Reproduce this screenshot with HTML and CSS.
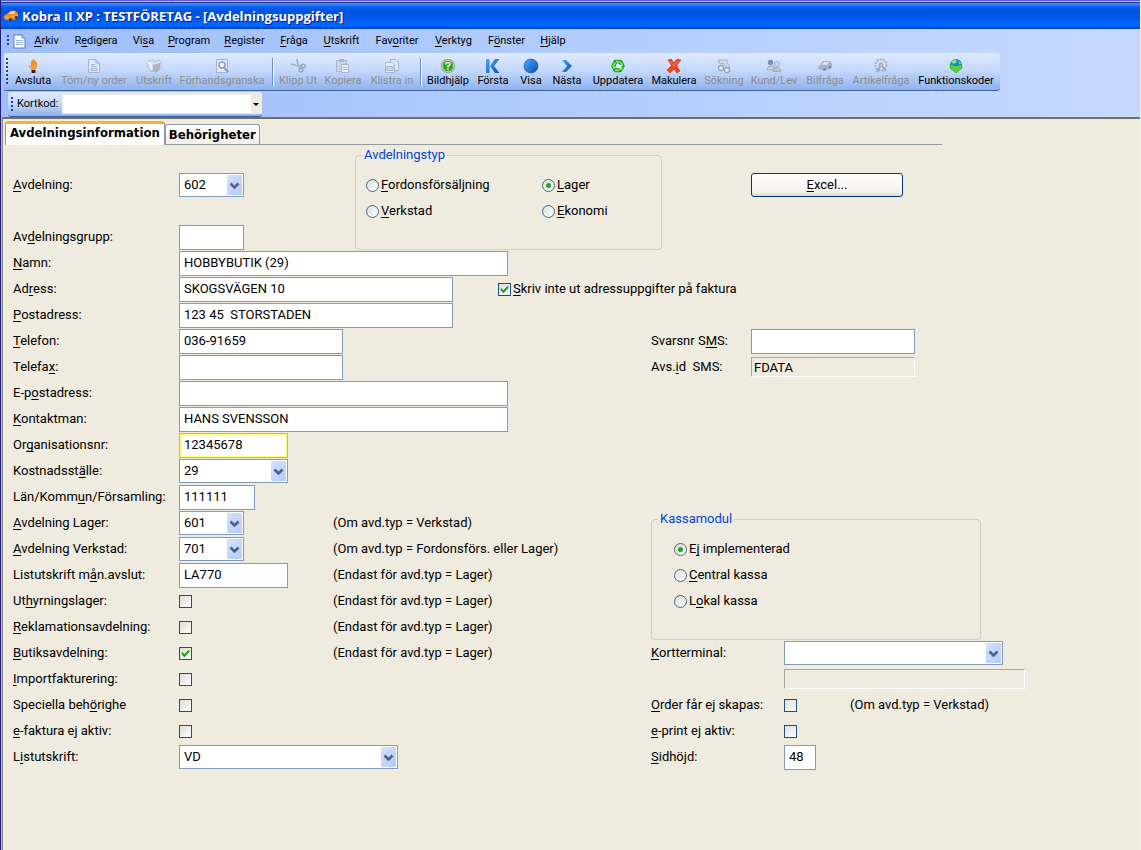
FILE: index.html
```html
<!DOCTYPE html>
<html lang="sv">
<head>
<meta charset="utf-8">
<title>Kobra II XP : TESTFÖRETAG - [Avdelningsuppgifter]</title>
<link rel="stylesheet" href="styles.css">
</head>
<body>
<svg class="defs" width="0" height="0" aria-hidden="true">
  <defs>
    <linearGradient id="blue" x1="0" y1="0" x2="1" y2="1"><stop offset="0" stop-color="#4aa8f5"/><stop offset="1" stop-color="#0b50b4"/></linearGradient>
    <symbol id="chevron" viewBox="0 0 15 20"><path d="M3.5 8.5 7.5 12.5 11.5 8.5" fill="none" stroke="#4d6185" stroke-width="2.6"/></symbol>
  </defs>
</svg>
<div class="window">
  <header class="titlebar">
    <svg width="16" height="14" viewBox="0 0 16 14"><path d="M1 8 Q1 5.500 4 5 L7 2 Q10 .8 13 2 L15 5 V8 L12 10.500 6 11.500 2 10.500Z" fill="#f58a1f"/><path d="M5.500 5 8 2.800 Q10 2 12 2.800 L10.500 5.300Z" fill="#ffd9a0"/><path d="M1 8 6 9 14 6.500" stroke="#ffc070" fill="none"/><circle cx="7.500" cy="10.500" r="1.700" fill="#4a2a20"/><circle cx="13.300" cy="8.300" r="1.400" fill="#4a2a20"/></svg>
    <h1>Kobra II XP : TESTFÖRETAG - [Avdelningsuppgifter]</h1>
  </header>
  <nav class="menubar">
    <span class="grip grip-menu"></span>
    <svg width="13" height="15" viewBox="0 0 13 15"><path d="M1 1H9L12 4V14H1Z" fill="#fff" stroke="#6f7f9c"/><path d="M9 1V4H12" fill="#dde6f5" stroke="#6f7f9c"/><path d="M3 6.500H10M3 8.500H10M3 10.500H10" stroke="#9db7dc"/></svg>
    <a href="#"><u>A</u>rkiv</a><a href="#">R<u>e</u>digera</a><a href="#">Vi<u>s</u>a</a><a href="#"><u>P</u>rogram</a><a href="#"><u>R</u>egister</a><a href="#"><u>F</u>råga</a><a href="#"><u>U</u>tskrift</a><a href="#">Fav<u>o</u>riter</a><a href="#"><u>V</u>erktyg</a><a href="#">F<u>ö</u>nster</a><a href="#"><u>H</u>jälp</a>
  </nav>
  <div class="toolbar">
    <span class="grip"></span>
    <button><svg viewBox="0 0 16 16"><path d="M5 10 3.500 7.500 5 7 6 8 6 3 Q6.500 2 7.200 3L7.500 1.500Q8.300.5 9 1.500L9.500 2.500Q10.500 2 10.800 3L11 4Q12 4 12 5V9L10.500 12H6.500Z" fill="#f89a35"/><path d="M7.300 3V7M9 2V7M10.700 4V7" stroke="#d8701a" stroke-width=".5"/><path d="M6.500 12H10.500V15H6.500Z" fill="#4a1d12"/></svg>Avsluta</button>
    <button disabled><svg viewBox="0 0 16 16"><path d="M2.500 1.500H10L13.500 5V14.500H2.500Z" fill="#dfe8f8" stroke="#a9b4ca"/><path d="M10 1.500V5H13.500M5 6.500H9M5 8.500H11M5 10.500H11V12.500H5Z" fill="none" stroke="#a9b4ca"/></svg>Töm/ny order</button>
    <button disabled><svg viewBox="0 0 16 16"><path d="M1 4 6 2 9 4 13 2 15 4V11L10 14 5 13 2 9Z" fill="#dfe6f3" stroke="#b3bccd"/><path d="M6 7 14 5V11L10 14 6 12Z" fill="#a9b4c9"/><path d="M1 4 6 7V12" stroke="#fff" fill="none"/></svg>Utskrift</button>
    <button disabled><svg viewBox="0 0 16 16"><path d="M2.500 1.500H13.500V14.500H2.500Z" fill="#dfe8f8" stroke="#a9b4ca"/><circle cx="8" cy="7" r="3" fill="#f2f6ff" stroke="#8e9db8" stroke-width="1.500"/><path d="M10 9.500 14 14" stroke="#8e9db8" stroke-width="2"/></svg>Förhandsgranska</button>
    <span class="sep"></span>
    <button disabled><svg viewBox="0 0 16 16"><path d="M7 1 8 8 11 10M1 6 8 8 13 7" fill="none" stroke="#a4b0c8" stroke-width="1.700"/><circle cx="11" cy="12" r="2" fill="none" stroke="#98a5bf" stroke-width="1.300"/><circle cx="13.500" cy="8" r="1.800" fill="none" stroke="#98a5bf" stroke-width="1.300"/></svg>Klipp Ut</button>
    <button disabled><svg viewBox="0 0 16 16"><path d="M1.500 2.500H11.500V13.500H1.500Z" fill="#cbd6ea" stroke="#a9b4ca"/><path d="M4 1H9V4H4Z" fill="#a9b4ca"/><path d="M6.500 6.500H13.500V14.500H6.500Z" fill="#e6eefc" stroke="#a9b4ca"/><path d="M8 9.500H12M8 11.500H12" stroke="#a9b4ca"/></svg>Kopiera</button>
    <button disabled><svg viewBox="0 0 16 16"><path d="M6.500 1.500H12L14.500 4V12.500H6.500Z" fill="#dfe8f8" stroke="#a9b4ca"/><path d="M1.500 4.500H8L10.500 7V14.500H1.500Z" fill="#e6eefc" stroke="#a9b4ca"/><path d="M3 8.500H9V12.500H3Z" fill="#cbd6ea" stroke="#a9b4ca"/></svg>Klistra in</button>
    <span class="sep"></span>
    <button><svg viewBox="0 0 16 16"><circle cx="8" cy="8" r="6.500" fill="#25a51c" stroke="#a9aa9d" stroke-width="1.500"/><circle cx="8" cy="8" r="5.500" fill="none" stroke="#d9efd0" stroke-width=".7"/><path d="M6 6.500Q6 4.500 8 4.500T10 6.300Q10 7.300 8 8.200V9.300M8 10.300V11.800" fill="none" stroke="#fff" stroke-width="1.600"/></svg>Bildhjälp</button>
    <button><svg viewBox="0 0 16 16"><path d="M1 1H4.500V15H1ZM10 1H14.500L9 8 14.500 15H10L5 8Z" fill="url(#blue)"/></svg>Första</button>
    <button><svg viewBox="0 0 16 16"><circle cx="8" cy="8" r="7" fill="url(#blue)" stroke="#1259b2" stroke-width=".7"/></svg>Visa</button>
    <button><svg viewBox="0 0 16 16"><path d="M3 2H7L13 8 7 14H3L8 8Z" fill="url(#blue)"/></svg>Nästa</button>
    <button><svg viewBox="0 0 16 16"><path d="M3.300 8 5.500 3.700 10.500 3.700 12.700 8 10 12.300 5.500 12.300Z" fill="none" stroke="#17a018" stroke-width="4" stroke-linejoin="round"/><path d="M3.300 8 5.500 3.700 10.500 3.700 12.700 8 10 12.300 5.500 12.300Z" fill="none" stroke="#7be066" stroke-width="2" stroke-dasharray="4 1.200"/><path d="M5 10 8 4.500 8.500 8 12 6.500 10.500 11 8 9.500Z" fill="#eefaea"/></svg>Uppdatera</button>
    <button><svg viewBox="0 0 16 16"><path d="M2 2 5 1 8 5 11 1 15 2 10.500 7.500 14 13 11 15 8 11 4 15 1 12 5.500 7.500Z" fill="#f2451e" stroke="#c92a10" stroke-width=".6"/><path d="M3.500 3 8 8 12.500 2.500" stroke="#ff9170" fill="none" stroke-width=".8"/></svg>Makulera</button>
    <button disabled><svg viewBox="0 0 16 16"><path d="M2 2H11V5L14 9 12 11 8 6 3 5Z" fill="#d3dae6" stroke="#a6b0c2"/><circle cx="5" cy="10" r="2.500" fill="#e6ebf4" stroke="#98a3b8" stroke-width="1.300"/><circle cx="11" cy="12" r="2.500" fill="#e6ebf4" stroke="#98a3b8" stroke-width="1.300"/></svg>Sökning</button>
    <button disabled><svg viewBox="0 0 16 16"><circle cx="4.500" cy="4.500" r="2.700" fill="#7c90b8"/><path d="M1 12Q1 8 5 8T8 12Z" fill="#c7d1e3" stroke="#9da9c0"/><circle cx="11" cy="6" r="2.500" fill="#d5dce9" stroke="#9da9c0"/><path d="M7 13.500Q8 9 11 9T14.500 13.500Z" fill="#bac5da" stroke="#9da9c0"/></svg>Kund/Lev</button>
    <button disabled><svg viewBox="0 0 16 16"><path d="M1 9 3 7 6 3 13 3 15 6V9L11 12 4 12 1 11Z" fill="#aab3c6"/><path d="M5 6.500 7 4H12L10 7Z" fill="#dce3ef"/><circle cx="7.500" cy="11.500" r="1.500" fill="#7f899d"/><circle cx="13" cy="9.500" r="1.300" fill="#7f899d"/></svg>Bilfråga</button>
    <button disabled><svg viewBox="0 0 16 16"><circle cx="8" cy="7" r="5.500" fill="#dfe5ef" stroke="#a3acbc" stroke-width="2" stroke-dasharray="2 1"/><circle cx="8" cy="7" r="2" fill="#bcc6d8" stroke="#98a3b8"/><path d="M9 8 13 13M7 9 4 14" stroke="#98a3b8" stroke-width="2"/></svg>Artikelfråga</button>
    <button><svg viewBox="0 0 16 16"><circle cx="8" cy="7" r="6" fill="#168cc5"/><path d="M3 4 7 1 9 4 6 6ZM10 3 13 5 12 7Z" fill="#8de07a"/><path d="M2 7H5Q8 9 11 7H14V10L8 15 2 10Z" fill="#55d52f" stroke="#2c9b20" stroke-width=".6"/></svg>Funktionskoder</button>
  </div>
  <div class="cardbar">
    <span class="grip grip-card"></span>
    <label for="kortkod">Kortkod:</label>
    <span class="flatcombo"><select id="kortkod"><option></option></select><svg width="10" height="18" viewBox="0 0 10 18"><path d="M2 8H8L5 11Z"/></svg></span>
  </div>
  <main>
    <div class="tabs" role="tablist">
      <button class="tab active" role="tab" aria-selected="true">Avdelningsinformation</button>
      <button class="tab" role="tab" aria-selected="false">Behörigheter</button>
    </div>
    <form class="form">
      <label class="l r2" for="avd"><u>A</u>vdelning:</label>
      <span class="f r2 combo w65"><select id="avd"><option>602</option></select><svg class="arrow"><use href="#chevron"/></svg></span>
      <fieldset class="typ">
        <legend>Avdelningstyp</legend>
        <div class="radios two">
          <label><input type="radio" name="typ"><span><u>F</u>ordonsförsäljning</span></label>
          <label><input type="radio" name="typ" checked><span><u>L</u>ager</span></label>
          <label><input type="radio" name="typ"><span><u>V</u>erkstad</span></label>
          <label><input type="radio" name="typ"><span><u>E</u>konomi</span></label>
        </div>
      </fieldset>
      <button type="button" class="excel r2"><u>E</u>xcel...</button>

      <label class="l r4" for="grp">Av<u>d</u>elningsgrupp:</label><input class="f r4 w65" id="grp">
      <label class="l r5" for="namn"><u>N</u>amn:</label><input class="f r5 w329" id="namn" value="HOBBYBUTIK (29)">
      <label class="l r6" for="adr">Ad<u>r</u>ess:</label><input class="f r6 w274" id="adr" value="SKOGSVÄGEN 10">
      <label class="skriv r6"><input type="checkbox" checked><span><u>S</u>kriv inte ut adressuppgifter på faktura</span></label>
      <label class="l r7" for="post"><u>P</u>ostadress:</label><input class="f r7 w274" id="post" value="123 45  STORSTADEN">
      <label class="l r8" for="tel"><u>T</u>elefon:</label><input class="f r8 w164" id="tel" value="036-91659">
      <label class="l2 r8" for="svar">Svarsnr S<u>M</u>S:</label><input class="f2 r8 w164" id="svar">
      <label class="l r9" for="fax">Telefa<u>x</u>:</label><input class="f r9 w164" id="fax">
      <label class="l2 r9" for="avs">Avs.<u>i</u>d&nbsp; SMS:</label><input class="f2 r9 w164 readonly" id="avs" value="FDATA" readonly>
      <label class="l r10" for="epost">E-p<u>o</u>stadress:</label><input class="f r10 w329" id="epost">
      <label class="l r11" for="kon"><u>K</u>ontaktman:</label><input class="f r11 w329" id="kon" value="HANS SVENSSON">
      <label class="l r12" for="org">Or<u>g</u>anisationsnr:</label><input class="f r12 w109 current" id="org" value="12345678">
      <label class="l r13" for="kost">Kostnadsst<u>ä</u>lle:</label>
      <span class="f r13 combo w109"><select id="kost"><option>29</option></select><svg class="arrow"><use href="#chevron"/></svg></span>
      <label class="l r14" for="lan">Län/Komm<u>u</u>n/Församling:</label><input class="f r14 w76" id="lan" value="111111">
      <label class="l r15" for="lager"><u>A</u>vdelning Lager:</label>
      <span class="f r15 combo w65"><select id="lager"><option>601</option></select><svg class="arrow"><use href="#chevron"/></svg></span>
      <span class="n r15">(Om avd.typ = Verkstad)</span>
      <label class="l r16" for="verk"><u>A</u>vdelning Verkstad:</label>
      <span class="f r16 combo w65"><select id="verk"><option>701</option></select><svg class="arrow"><use href="#chevron"/></svg></span>
      <span class="n r16">(Om avd.typ = Fordonsförs. eller Lager)</span>
      <label class="l r17" for="man">Listutskrift m<u>å</u>n.avslut:</label><input class="f r17 w109" id="man" value="LA770">
      <span class="n r17">(Endast för avd.typ = Lager)</span>
      <label class="l r18" for="uth">Ut<u>h</u>yrningslager:</label><input class="f r18" type="checkbox" id="uth">
      <span class="n r18">(Endast för avd.typ = Lager)</span>
      <label class="l r19" for="rek"><u>R</u>eklamationsavdelning:</label><input class="f r19" type="checkbox" id="rek">
      <span class="n r19">(Endast för avd.typ = Lager)</span>
      <label class="l r20" for="but"><u>B</u>utiksavdelning:</label><input class="f r20" type="checkbox" id="but" checked>
      <span class="n r20">(Endast för avd.typ = Lager)</span>
      <label class="l r21" for="imp"><u>I</u>mportfakturering:</label><input class="f r21" type="checkbox" id="imp">
      <label class="l r22" for="spec">Speciella beh<u>ö</u>righe</label><input class="f r22" type="checkbox" id="spec">
      <label class="l r23" for="efa"><u>e</u>-faktura ej aktiv:</label><input class="f r23" type="checkbox" id="efa">
      <label class="l r24" for="lst">L<u>i</u>stutskrift:</label>
      <span class="f r24 combo w219"><select id="lst"><option>VD</option></select><svg class="arrow"><use href="#chevron"/></svg></span>

      <fieldset class="kassa">
        <legend>Kassamodul</legend>
        <div class="radios">
          <label><input type="radio" name="kassa" checked><span>E<u>j</u> implementerad</span></label>
          <label><input type="radio" name="kassa"><span><u>C</u>entral kassa</span></label>
          <label><input type="radio" name="kassa"><span>L<u>o</u>kal kassa</span></label>
        </div>
      </fieldset>
      <label class="l2 r20" for="kort"><u>K</u>ortterminal:</label>
      <span class="f3 r20 combo w219"><select id="kort"><option></option></select><svg class="arrow"><use href="#chevron"/></svg></span>
      <input class="f3 r21 w241 readonly" aria-label="Kortterminal, namn" readonly>
      <label class="l2 r22" for="ord"><u>O</u>rder får ej skapas:</label><input class="f3 r22" type="checkbox" id="ord">
      <span class="n2 r22">(Om avd.typ = Verkstad)</span>
      <label class="l2 r23" for="epr"><u>e</u>-print ej aktiv:</label><input class="f3 r23" type="checkbox" id="epr">
      <label class="l2 r24" for="sid"><u>S</u>idhöjd:</label><input class="f3 r24 w32" id="sid" value="48">
    </form>
  </main>
</div>
</body>
</html>
```

FILE: styles.css
```css
* { box-sizing: border-box; }
body {
  margin: 0;
  font: 13px/18px Roboto, "DejaVu Sans Condensed", sans-serif;
  color: #000;
  background: #efebde;
}
.defs { position: absolute; }
button, input, select { font: inherit; color: inherit; }
u { text-underline-offset: 2px; text-decoration-thickness: 1px; text-decoration-skip-ink: none; }

.window {
  display: flex;
  flex-direction: column;
  min-height: 100vh;
  border-left: 1px solid #20207c;
  border-right: 1px solid #f4f2ea;
  background: linear-gradient(90deg, #9ebefa, #c6daff);
}
.titlebar {
  display: flex;
  align-items: center;
  gap: 3px;
  height: 29px;
  padding: 3px 2px 0;
  background: linear-gradient(180deg, #5a58e0 0, #5a58e0 1px, #c2c4f6 1px, #c2c4f6 2px, #25347e 2px, #25347e 3px, #3d95ff 3px, #0a5ff0 7px, #0053e1 11px, #0058ee 18px, #0068ff 24px, #0064fa 26px, #003fc8 29px);
}
.titlebar h1 {
  margin: 0;
  font: bold 13px/18px "Open Sans", "Noto Sans", sans-serif;
  color: #fff;
  text-shadow: 1px 1px #0a1883;
}

.grip {
  align-self: center;
  width: 2px;
  height: 28px;
  background: repeating-linear-gradient(180deg, #27417b 0 2px, transparent 2px 4px);
}
.menubar {
  display: grid;
  grid-template-columns: 2px 18px 39px 60px 35px 56px 55px 44px 51px 60px 53px 53px 40px;
  align-items: center;
  height: 24px;
  padding-left: 6px;
}
.grip-menu { height: 12px; }
.menubar svg { margin-left: 4px; }
.menubar a {
  text-align: center;
  white-space: nowrap;
  color: #000;
  text-decoration: none;
}
.menubar, .toolbar, .cardbar { font-size: 11px; line-height: 14px; }

.toolbar {
  display: grid;
  grid-template-columns: 4px 46px 76px 44px 92px 10px 40px 50px 48px 10px 44px 46px 30px 42px 60px 52px 48px 52px 50px 62px 88px;
  align-self: flex-start;
  height: 38px;
  margin-left: 3px;
  padding-left: 2px;
  border-bottom: 1px solid #3b619c;
  border-radius: 3px;
  background: linear-gradient(180deg, #dfeaff, #c6dafd 45%, #8fb2ec);
}
.toolbar button {
  display: flex;
  flex-direction: column;
  align-items: center;
  padding: 5px 0 0;
  border: 0;
  background: none;
  white-space: nowrap;
}
.toolbar button:disabled { color: #8d8d8d; }
.toolbar svg { width: 16px; height: 16px; flex: none; }
.sep {
  justify-self: center;
  align-self: center;
  width: 2px;
  height: 28px;
  border-left: 1px solid #6a8ccb;
  border-right: 1px solid #f1f9ff;
}

.cardbar {
  display: flex;
  align-items: center;
  align-self: flex-start;
  gap: 4px;
  height: 25px;
  margin: 1px 0 0 7px;
  padding-left: 3px;
  border-bottom: 1px solid #3b619c;
  border-radius: 3px;
  background: linear-gradient(180deg, #dfeaff, #c6dafd 45%, #8fb2ec);
}
.grip-card { height: 14px; }
.flatcombo { display: flex; position: relative; padding: 1px; background: #efebde; }
.flatcombo select {
  appearance: none;
  width: 198px;
  height: 18px;
  border: 0;
  background: #fff;
}
.flatcombo svg { position: absolute; right: 1px; top: 1px; background: #efebde; pointer-events: none; }

main {
  flex: 1;
  margin-left: 1px;
  padding: 3px 0 0 2px;
  border-top: 2px solid #716f64;
  border-left: 1px solid #8d8a7c;
  background: #efebde;
}
.tabs {
  display: flex;
  align-items: flex-end;
  width: 937px;
  max-width: 100%;
  height: 23px;
  border-bottom: 1px solid #919b9c;
  font-family: "DejaVu Sans Condensed", "DejaVu Sans", sans-serif;
}
.tab {
  height: 20px;
  padding: 0 3px;
  border: 1px solid #919b9c;
  border-bottom: 0;
  border-radius: 3px 3px 0 0;
  background: linear-gradient(180deg, #fff, #f0f0ea);
  font-weight: bold;
}
.tab.active {
  height: 24px;
  margin-bottom: -1px;
  padding: 0 4px 3px;
  border-top: 3px solid #f9b233;
  background: #fff;
}

.form {
  display: grid;
  grid-template-columns: 166px 154px 22px 143px 153px 100px 33px 66px 1fr;
  grid-template-rows: repeat(24, 26px);
  align-items: center;
  justify-items: start;
  padding: 1px 0 0 8px;
  white-space: nowrap;
}
.l { grid-column: 1; }
.f { grid-column: 2 / span 3; }
.n { grid-column: 3 / span 3; }
.skriv { grid-column: 5 / span 3; }
.l2 { grid-column: 6 / span 2; }
.f2 { grid-column: 7 / -1; }
.f3 { grid-column: 8 / -1; }
.n2 { grid-column: 9; }

.r2 { grid-row: 2; } .r4 { grid-row: 4; } .r5 { grid-row: 5; } .r6 { grid-row: 6; }
.r7 { grid-row: 7; } .r8 { grid-row: 8; } .r9 { grid-row: 9; } .r10 { grid-row: 10; }
.r11 { grid-row: 11; } .r12 { grid-row: 12; } .r13 { grid-row: 13; } .r14 { grid-row: 14; }
.r15 { grid-row: 15; } .r16 { grid-row: 16; } .r17 { grid-row: 17; } .r18 { grid-row: 18; }
.r19 { grid-row: 19; } .r20 { grid-row: 20; } .r21 { grid-row: 21; } .r22 { grid-row: 22; }
.r23 { grid-row: 23; } .r24 { grid-row: 24; }

.w32 { width: 32px; } .w65 { width: 65px; } .w76 { width: 76px; } .w109 { width: 109px; }
.w164 { width: 164px; } .w219 { width: 219px; } .w241 { width: 241px; }
.w274 { width: 274px; } .w329 { width: 329px; }

input { margin: 0; }
.form > input:not([type]) {
  align-self: end;
  height: 25px;
  padding: 0 4px 2px;
  border: 1px solid #7f9db9;
  background: #fff;
}
.form > input.current { border-color: #b5bd72; box-shadow: inset 0 0 0 1px #ffff70; }
.form > input.readonly {
  align-self: center;
  height: 20px;
  padding: 0 2px;
  border-color: #aca899 #fff #fff #aca899;
  background: #efebde;
}
.combo { display: flex; position: relative; }
.combo select {
  appearance: none;
  width: 100%;
  height: 24px;
  padding: 0 20px 0 4px;
  border: 1px solid #7f9db9;
  border-radius: 0;
  background: #fff;
}
.arrow {
  position: absolute;
  top: 2px;
  right: 2px;
  width: 15px;
  height: 20px;
  border-radius: 1px;
  background: linear-gradient(135deg, #d6e2fd, #b4cbfb);
  pointer-events: none;
}

input[type="checkbox"], input[type="radio"] {
  appearance: none;
  display: grid;
  place-items: center;
  flex: none;
  width: 13px;
  height: 13px;
  border: 1px solid #1c5180;
  background: linear-gradient(135deg, #dcdcd7, #fff);
}
input[type="radio"] { border-radius: 50%; border-color: #3d6a95; }
input[type="radio"]:checked::before {
  content: "";
  width: 5px;
  height: 5px;
  border-radius: 50%;
  background: #21a121;
}
input[type="checkbox"]:checked::before {
  content: "";
  width: 9px;
  height: 9px;
  background: #21a121;
  clip-path: polygon(8% 35%, 38% 62%, 92% 8%, 92% 42%, 38% 96%, 8% 68%);
}
.skriv, .radios label { display: flex; align-items: center; gap: 2px; }

fieldset {
  align-self: stretch;
  margin: 0;
  padding: 8px 0 0 10px;
  border: 1px solid #d0d0bf;
  border-radius: 4px;
}
legend { padding: 0 2px; margin-left: -4px; color: #0046d5; }
.radios { display: grid; grid-auto-rows: 26px; align-items: center; }
.radios.two { grid-template-columns: 176px 1fr; }
.typ { grid-column: 4 / -1; grid-row: 1 / 5; width: 307px; }
.kassa { grid-column: 6 / -1; grid-row: 15 / 20; width: 330px; padding-left: 22px; }
.kassa legend { margin-left: -16px; }
.excel {
  grid-column: 7 / -1;
  width: 152px;
  height: 24px;
  padding: 0;
  border: 1px solid #003c74;
  border-radius: 3px;
  background: linear-gradient(180deg, #fff, #f4f1ec 80%, #dcd5cb);
}
```
